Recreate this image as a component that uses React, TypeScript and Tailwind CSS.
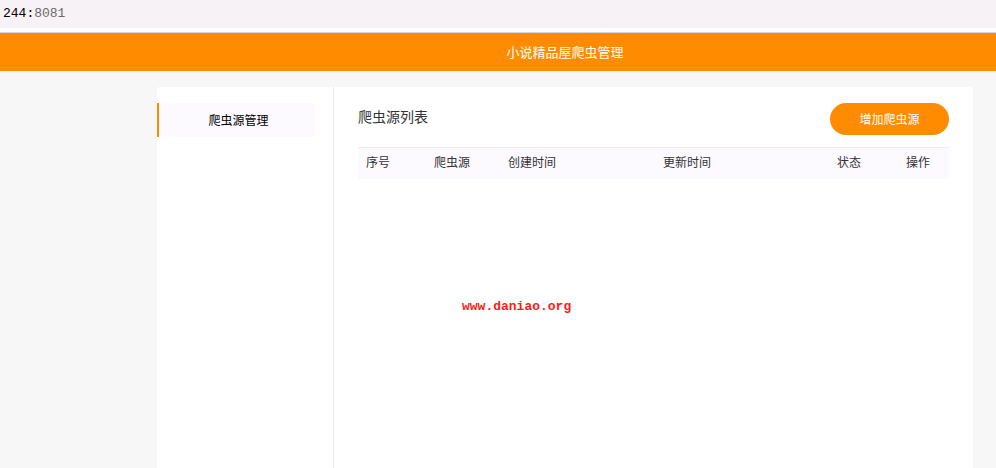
export default function App() {
  const cols = ['序号', '爬虫源', '创建时间', '更新时间', '状态', '操作'];
  return (
    <div className="bg-[#f7f7f7] font-['Noto_Sans_CJK_SC',sans-serif] overflow-hidden h-[468px]">
      <div className="h-[28px] bg-[#f6f2f6] flex items-center pl-[3px] font-['Liberation_Mono',monospace] text-[13px]">
        <span className="text-black">244:</span>
        <span className="text-[#6b6b6b]">8081</span>
      </div>
      <div className="h-[4px] bg-white" />
      <div className="h-[1px] bg-[#d6d6de]" />
      <div className="h-[38px] bg-[#ff8c00] text-white text-[13px] flex items-center justify-center pl-[134px]">
        小说精品屋爬虫管理
      </div>
      <div className="pt-[16px] pl-[157px] pr-[23px]">
        <div className="bg-white rounded-[3px] flex h-[400px]">
          <div className="w-[177px] border-r border-[#ececec] pt-[16px] pr-[18px]">
            <div className="h-[34px] bg-[#fdfaff] border-l-2 border-[#ff8c00] flex items-center justify-center pl-[3px] text-[12px] text-black">
              爬虫源管理
            </div>
          </div>
          <div className="flex-1 pt-[16px] pl-[24px] pr-[24px]">
            <div className="flex justify-between items-start h-[32px]">
              <div className="text-[14px] text-[#333] leading-[26px]">爬虫源列表</div>
              <button className="w-[119px] h-[32px] rounded-full bg-[#ff8c00] text-white text-[12px]">
                增加爬虫源
              </button>
            </div>
            <div className="mt-[12px] border-t border-[#eeeeee] bg-[#fdfaff] h-[32px] pb-[3px] grid grid-cols-[68px_74px_155px_174px_69px_1fr] items-center text-[12px] text-[#333]">
              {cols.map((c) => (
                <div key={c} className="pl-[8px]">
                  {c}
                </div>
              ))}
            </div>
            <div className="pt-[118px] pl-[104px] font-['Liberation_Mono',monospace] text-[13px] font-bold text-[#ff1a1a]">
              www.daniao.org
            </div>
          </div>
        </div>
      </div>
    </div>
  );
}
